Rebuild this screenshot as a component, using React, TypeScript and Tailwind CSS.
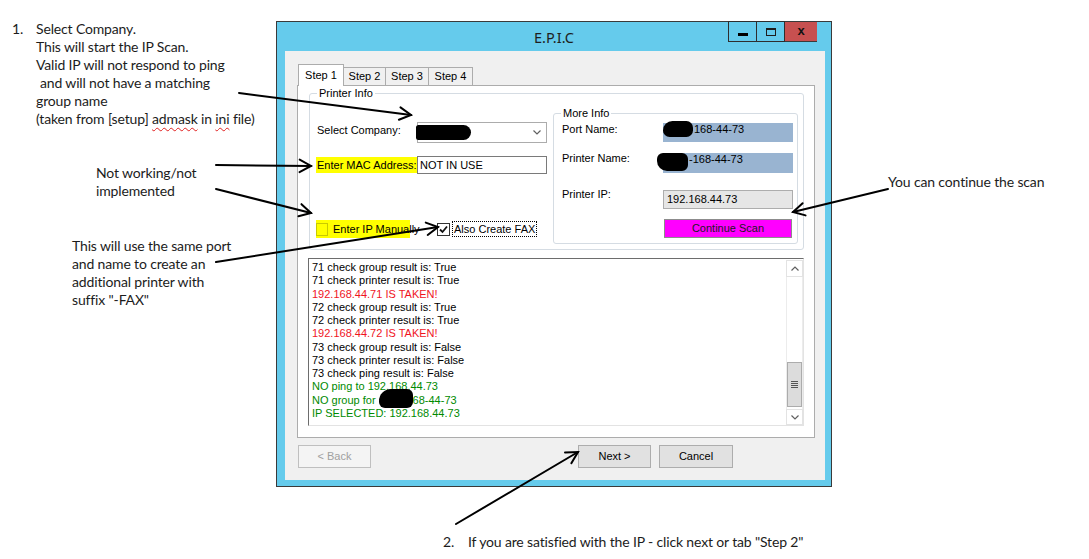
import React from 'react';

type Pt = { x1: number; y1: number; x2: number; y2: number };

// arrows drawn on top of the screenshot
const arrows: Pt[] = [
  { x1: 239, y1: 93, x2: 411, y2: 115 },
  { x1: 216, y1: 165, x2: 311, y2: 166 },
  { x1: 216, y1: 189, x2: 311, y2: 213 },
  { x1: 216, y1: 262, x2: 438, y2: 227 },
  { x1: 888, y1: 189, x2: 793, y2: 212 },
  { x1: 456, y1: 524, x2: 578, y2: 452 },
];

const logLines: { text: string; tone: 'k' | 'r' | 'g' }[] = [
  { text: '71 check group result is: True', tone: 'k' },
  { text: '71 check printer result is: True', tone: 'k' },
  { text: '192.168.44.71 IS TAKEN!', tone: 'r' },
  { text: '72 check group result is: True', tone: 'k' },
  { text: '72 check printer result is: True', tone: 'k' },
  { text: '192.168.44.72 IS TAKEN!', tone: 'r' },
  { text: '73 check group result is: False', tone: 'k' },
  { text: '73 check printer result is: False', tone: 'k' },
  { text: '73 check ping result is: False', tone: 'k' },
  { text: 'NO ping to 192.168.44.73', tone: 'g' },
  { text: 'NO group for', tone: 'g' },
  { text: 'IP SELECTED: 192.168.44.73', tone: 'g' },
];

const toneClass = { k: 'text-black', r: 'text-[#f0141e]', g: 'text-[#008a00]' };

const Arrow: React.FC<Pt> = ({ x1, y1, x2, y2 }) => {
  const a = Math.atan2(y2 - y1, x2 - x1);
  const len = 13;
  const spread = 0.5;
  const w1 = `${x2 - len * Math.cos(a - spread)},${y2 - len * Math.sin(a - spread)}`;
  const w2 = `${x2 - len * Math.cos(a + spread)},${y2 - len * Math.sin(a + spread)}`;
  return (
    <g>
      <line x1={x1} y1={y1} x2={x2} y2={y2} />
      <polyline points={`${w1} ${x2},${y2} ${w2}`} fill="none" />
    </g>
  );
};

const GroupBox: React.FC<{ title: string; className?: string; children?: React.ReactNode }> = ({
  title,
  className,
  children,
}) => (
  <div className={`relative border border-[#d5dce3] rounded-[3px] ${className ?? ''}`}>
    <span className="absolute -top-[7px] left-[7px] px-[2px] bg-white leading-[13px]">{title}</span>
    {children}
  </div>
);

const Chevron: React.FC<{ up?: boolean }> = ({ up }) => (
  <svg width="8" height="5" viewBox="0 0 8 5" className={up ? 'rotate-180' : ''}>
    <path d="M0.5 0.5 L4 4 L7.5 0.5" fill="none" stroke="#606060" strokeWidth="1.2" />
  </svg>
);

const Note: React.FC<{ className: string; children: React.ReactNode }> = ({ className, children }) => (
  <div
    className={`absolute font-['Lato',sans-serif] text-[14px] leading-[18px] tracking-[-0.15px] text-[#1c1c1c] ${className}`}
  >
    {children}
  </div>
);

export default function App() {
  return (
    <div className="relative w-[1089px] h-[559px] bg-white overflow-hidden">
      {/* Annotations */}
      <Note className="left-[12px] top-[20px] flex">
        <span className="w-[24px]">1.</span>
        <div>
          <div>Select Company.</div>
          <div>This will start the IP Scan.</div>
          <div>Valid IP will not respond to ping</div>
          <div className="pl-[4px]">and will not have a matching</div>
          <div>group name</div>
          <div>
            (taken from [setup]{' '}
            <span className="underline decoration-wavy decoration-[#e02020] decoration-1 underline-offset-[3px]">
              admask
            </span>{' '}
            in{' '}
            <span className="underline decoration-wavy decoration-[#e02020] decoration-1 underline-offset-[3px]">
              ini
            </span>{' '}
            file)
          </div>
        </div>
      </Note>
      <Note className="left-[96px] top-[164px]">
        <div>Not working/not</div>
        <div>implemented</div>
      </Note>
      <Note className="left-[72px] top-[237px]">
        <div>This will use the same port</div>
        <div>and name to create an</div>
        <div>additional printer with</div>
        <div>suffix "-FAX"</div>
      </Note>
      <Note className="left-[888px] top-[173px]">You can continue the scan</Note>
      <Note className="left-[443px] top-[533px] flex">
        <span className="w-[25px]">2.</span>
        <span>If you are satisfied with the IP - click next or tab "Step 2"</span>
      </Note>

      {/* Window */}
      <div className="absolute left-[276px] top-[21px] w-[556px] h-[466px] border border-[#3a3a3a] bg-[#65cbec] flex flex-col">
        <div className="h-[29px] grid grid-cols-[1fr_auto_1fr]">
          <div />
          <div className="pt-[6px] font-['Noto_Sans',sans-serif] text-[14.5px] leading-[18px] text-[#1e1e1e]">E.P.I.C</div>
          <div className="flex justify-end items-start pr-[14px] -mt-px">
            <div className="w-[29px] h-[21px] border border-[#2e2e2e] flex items-end justify-center pb-[5px]">
              <div className="w-[10px] h-[3px] bg-black" />
            </div>
            <div className="w-[28px] h-[21px] border border-l-0 border-[#2e2e2e] flex items-center justify-center">
              <div className="w-[10px] h-[8px] border border-t-2 border-[#1e1e1e]" />
            </div>
            <div className="w-[32px] h-[21px] bg-[#c75050] border-y border-[#3a3a3a] flex items-center justify-center font-['Liberation_Sans',sans-serif] text-[13px] font-bold leading-none text-[#111] pb-[2px]">
              x
            </div>
          </div>
        </div>

        <div className="ml-[8px] mr-[6px] mb-[6px] h-[429px] bg-[#f0f0f0] pt-[13px] pl-[12px] font-['Liberation_Sans',Arial,sans-serif] text-[11px] leading-[13px] text-black">
          {/* Tabs */}
          <div className="flex items-end h-[21px] pl-[1px]">
            <div className="relative z-10 -mb-px h-[22px] w-[46px] bg-white border border-b-0 border-[#acacac] flex justify-center pt-[4px]">
              Step 1
            </div>
            <div className="h-[18px] w-[43px] -ml-px bg-[#f0f0f0] border border-b-0 border-[#acacac] flex items-center justify-center">
              Step 2
            </div>
            <div className="h-[18px] w-[44px] -ml-px bg-[#f0f0f0] border border-b-0 border-[#acacac] flex items-center justify-center">
              Step 3
            </div>
            <div className="h-[18px] w-[45px] -ml-px bg-[#f0f0f0] border border-b-0 border-[#acacac] flex items-center justify-center">
              Step 4
            </div>
          </div>

          {/* Tab page */}
          <div className="w-[518px] h-[353px] border border-[#acacac] bg-white pl-[10px] pt-[7px]">
            <GroupBox title="Printer Info" className="ml-[1px] w-[495px] h-[157px] flex">
              {/* Left column */}
              <div className="w-[243px] pl-[6px] pt-[28px]">
                <div className="flex items-start h-[21px]">
                  <span className="w-[101px] pl-[1px] pt-[2px]">Select Company:</span>
                  <div className="relative w-[130px] h-[21px] border border-[#acacac] bg-white flex items-center justify-end pr-[5px]">
                    <div className="absolute -left-[2px] top-[2px] w-[55px] h-[15px] bg-black rounded-l-[3px] rounded-r-[9px]" />
                    <Chevron />
                  </div>
                </div>
                <div className="flex items-center h-[18px] mt-[13px]">
                  <span className="w-[101px] h-[16px] pl-[1px] bg-[#ffff00] flex items-center">Enter MAC Address:</span>
                  <div className="w-[130px] h-[18px] border border-[#7a7a7a] bg-white pl-[2px] flex items-center">
                    NOT IN USE
                  </div>
                </div>
                <div className="flex items-center h-[18px] mt-[46px]">
                  <div className="w-[121px] h-[18px] flex items-center bg-[linear-gradient(to_right,#ffff00_94px,transparent_94px)]">
                    <div className="w-[12px] h-[13px] border border-[#c9c900] bg-[#ffff00]" />
                    <span className="ml-[5px] whitespace-nowrap">Enter IP Manually</span>
                  </div>
                  <div className="w-[13px] h-[13px] border border-[#333] bg-white flex items-center justify-center">
                    <svg width="11" height="11" viewBox="0 0 11 11">
                      <path d="M2 5.5 L4.5 8 L9 2.5" fill="none" stroke="#111" strokeWidth="1.8" />
                    </svg>
                  </div>
                  <span className="ml-[2px] h-[16px] px-[1px] border border-dotted border-black flex items-center whitespace-nowrap">
                    Also Create FAX
                  </span>
                </div>
              </div>

              {/* More Info */}
              <GroupBox title="More Info" className="mt-[19px] w-[245px] h-[131px] pl-[8px] pt-[9px]">
                <div className="flex items-start h-[19px]">
                  <span className="w-[101px]">Port Name:</span>
                  <div className="relative w-[130px] h-[19px] bg-[#99b4d1] pl-[31px]">
                    <div className="absolute left-0 -top-[2px] w-[30px] h-[16px] bg-black rounded-[7px] rounded-tl-[10px]" />
                    168-44-73
                  </div>
                </div>
                <div className="flex items-start h-[20px] mt-[11px]">
                  <span className="w-[101px] -mt-px">Printer Name:</span>
                  <div className="relative w-[130px] h-[20px] bg-[#99b4d1] pl-[26px]">
                    <div className="absolute -left-[6px] top-0 w-[31px] h-[18px] bg-black rounded-[6px] rounded-bl-[10px]" />
                    -168-44-73
                  </div>
                </div>
                <div className="flex items-start h-[19px] mt-[17px]">
                  <span className="w-[101px] -mt-[2px]">Printer IP:</span>
                  <div className="w-[130px] h-[19px] border border-[#adadad] bg-[#e6e6e6] pl-[3px] flex items-center">
                    192.168.44.73
                  </div>
                </div>
                <div className="mt-[10px] ml-[102px] w-[128px] h-[19px] bg-[#ff00ff] border border-[#8c8c8c] flex items-center justify-center text-[#1a1a1a]">
                  Continue Scan
                </div>
              </GroupBox>
            </GroupBox>

            {/* Log */}
            <div className="mt-[8px] w-[496px] h-[168px] border border-t-[#6d6d6d] border-l-[#6d6d6d] border-r-[#e3e3e3] border-b-[#e3e3e3] bg-white flex">
              <div className="flex-1 pl-[3px] pt-[2px]">
                {logLines.map((l, i) => (
                  <div key={i} className={`h-[13.25px] whitespace-nowrap ${toneClass[l.tone]}`}>
                    {l.text}
                    {i === 10 && (
                      <>
                        <span className="relative inline-block w-[37px] h-[13px] align-top">
                          <span className="absolute left-[3px] -top-[5px] w-[34px] h-[19px] bg-black rounded-[6px] rounded-tl-[12px]" />
                        </span>
                        68-44-73
                      </>
                    )}
                  </div>
                ))}
              </div>
              <div className="w-[17px] flex flex-col pt-[1px]">
                <div className="h-[17px] border border-[#e3e3e3] bg-white flex items-center justify-center">
                  <Chevron up />
                </div>
                <div className="flex-1 border-x border-[#ececec] bg-white flex flex-col justify-end pb-[2px]">
                  <div className="h-[45px] bg-[#dcdcdc] border border-[#acacac] flex flex-col items-center justify-center gap-[1px]">
                    <div className="w-[7px] h-px bg-[#555]" />
                    <div className="w-[7px] h-px bg-[#555]" />
                    <div className="w-[7px] h-px bg-[#555]" />
                    <div className="w-[7px] h-px bg-[#555]" />
                  </div>
                </div>
                <div className="h-[16px] border border-[#e3e3e3] bg-white flex items-center justify-center">
                  <Chevron />
                </div>
              </div>
            </div>
          </div>

          {/* Buttons */}
          <div className="w-[518px] mt-[7px] flex items-center pr-[82px]">
            <div className="ml-[1px] w-[73px] h-[23px] border border-[#bfbfbf] bg-[#f4f4f4] text-[#a0a0a0] flex items-center justify-center">
              &lt; Back
            </div>
            <div className="flex-1" />
            <div className="w-[73px] h-[23px] border border-[#adadad] bg-[#e1e1e1] flex items-center justify-center">
              Next &gt;
            </div>
            <div className="ml-[8px] w-[74px] h-[23px] border border-[#adadad] bg-[#e1e1e1] flex items-center justify-center">
              Cancel
            </div>
          </div>
        </div>
      </div>

      {/* Arrow overlay */}
      <svg
        className="absolute inset-0 pointer-events-none"
        width="1089"
        height="559"
        viewBox="0 0 1089 559"
        stroke="#000"
        strokeWidth="2"
        strokeLinecap="round"
      >
        {arrows.map((a, i) => (
          <Arrow key={i} {...a} />
        ))}
      </svg>
    </div>
  );
}
